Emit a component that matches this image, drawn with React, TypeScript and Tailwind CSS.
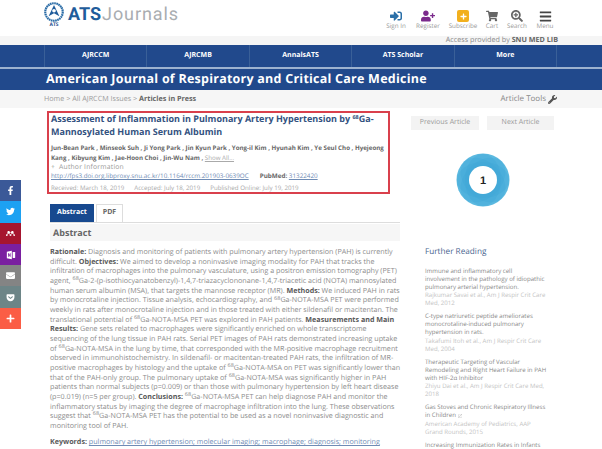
import type { ReactNode } from 'react';
import { FaBars, FaEnvelope, FaExternalLinkAlt, FaFacebookF, FaGetPocket, FaPlus, FaSearchPlus, FaShoppingCart, FaSignInAlt, FaTwitter, FaUserPlus, FaWrench } from 'react-icons/fa';
import { SiMendeley } from 'react-icons/si';

function SubscribeIcon() {
  return (
    <span className="w-[12px] h-[12px] rounded-[2px] bg-[#f2b01e] flex items-center justify-center text-white text-[7px]">
      <FaPlus />
    </span>
  );
}

function NoteIcon() {
  return (
    <svg viewBox="0 0 12 12" className="w-[10px] h-[10px]" fill="currentColor">
      <path d="M1 2 L7 1 V11 L1 10 Z" />
      <rect x="8" y="2.5" width="3" height="7" rx="0.5" />
      <path d="M2.5 8 V4 H3.4 L4.6 6.2 V4 H5.5 V8 H4.6 L3.4 5.8 V8 Z" fill="#7a1fa0" />
    </svg>
  );
}

const topLinks = [
  { label: 'Sign In', icon: <FaSignInAlt className="text-[#2a6fa8] text-[12px]" />, w: 'w-[30px]' },
  { label: 'Register', icon: <FaUserPlus className="text-[#7b2a8c] text-[14px]" />, w: 'w-[34px]' },
  { label: 'Subscribe', icon: <SubscribeIcon />, w: 'w-[36px]' },
  { label: 'Cart', icon: <FaShoppingCart className="text-[#666] text-[12px]" />, w: 'w-[22px]' },
  { label: 'Search', icon: <FaSearchPlus className="text-[#666] text-[12px]" />, w: 'w-[28px]' },
  { label: 'Menu', icon: <FaBars className="text-[#444] text-[13px]" />, w: 'w-[28px]' },
];

const navItems = ['AJRCCM', 'AJRCMB', 'AnnalsATS', 'ATS Scholar', 'More'];

const shareItems = [
  { icon: <FaFacebookF />, bg: 'bg-[#3b5998]' },
  { icon: <FaTwitter />, bg: 'bg-[#1da1f2]' },
  { icon: <SiMendeley />, bg: 'bg-[#a6152f]' },
  { icon: <NoteIcon />, bg: 'bg-[#7a1fa0]' },
  { icon: <FaEnvelope />, bg: 'bg-[#848484]' },
  { icon: <FaGetPocket />, bg: 'bg-[#6d8587]' },
  { icon: <FaPlus />, bg: 'bg-[#fb5d45]' },
];

// line breaks follow the sidebar's wrapping
const reading = [
  {
    title: 'Immune and inflammatory cell\ninvolvement in the pathology of idiopathic\npulmonary arterial hypertension.',
    meta: 'Rajkumar Savai et al., Am J Respir Crit Care\nMed, 2012',
  },
  {
    title: 'C-type natriuretic peptide ameliorates\nmonocrotaline-induced pulmonary\nhypertension in rats.',
    meta: 'Takafumi Itoh et al., Am J Respir Crit Care\nMed, 2004',
  },
  {
    title: 'Therapeutic Targeting of Vascular\nRemodeling and Right Heart Failure in PAH\nwith HIF-2α Inhibitor',
    meta: 'Zhiyu Dai et al., Am J Respir Crit Care Med,\n2018',
  },
  {
    title: 'Gas Stoves and Chronic Respiratory Illness\nin Children',
    meta: 'American Academy of Pediatrics, AAP\nGrand Rounds, 2015',
    external: true,
  },
  { title: 'Increasing Immunization Rates in Infants', meta: '' },
];

function Logo() {
  return (
    <div className="flex items-start gap-[4px]">
      <div className="flex flex-col items-center w-[20px]">
        <svg viewBox="0 0 24 24" className="w-[20px] h-[20px]">
          <circle cx="12" cy="12" r="10.5" fill="none" stroke="#2b6ca6" strokeWidth="2.6" strokeDasharray="2 0.6" />
          <circle cx="12" cy="12" r="8.2" fill="#fff" />
          <path d="M12 3.5 L18.5 17 L12 13.5 L5.5 17 Z" fill="#1f5c9b" />
          <circle cx="12" cy="10.5" r="2.2" fill="#fff" />
        </svg>
        <span className="text-[5px] leading-[5px] font-bold text-[#1f4f8f] mt-[1px]">ATS</span>
      </div>
      <div className="text-[18px] leading-[20px] font-['Roboto',sans-serif] mt-[3px]">
        <span className="font-bold text-[#1f5c9b]">ATS</span>
        <span className="text-[#a9adb1] ml-[1px] tracking-[0.9px]">Journals</span>
      </div>
    </div>
  );
}

function Iso({ children }: { children: ReactNode }) {
  return <sup className="text-[5.5px]">{children}</sup>;
}

function B({ children }: { children: ReactNode }) {
  return <strong className="font-bold text-[#5a5a5a]">{children}</strong>;
}

function Badge() {
  return (
    <svg viewBox="0 0 54 54" className="w-[54px] h-[54px]">
      <circle cx="27" cy="27" r="26.5" fill="#5bb9e0" />
      {[0, 45, 90, 135].map((a) => (
        <ellipse key={a} cx="27" cy="27" rx="26" ry="18" fill="#3fa6d6" opacity="0.35" transform={`rotate(${a} 27 27)`} />
      ))}
      <circle cx="27" cy="27" r="14" fill="#fff" />
      <text x="27" y="31" textAnchor="middle" fontSize="11" fontWeight="700" fill="#222" fontFamily="'Liberation Sans', sans-serif">1</text>
    </svg>
  );
}

export default function App() {
  return (
    <div className="w-[602px] h-[449px] overflow-hidden bg-white relative font-['Open_Sans',sans-serif] [text-rendering:geometricPrecision]">
      <header className="h-[36px] flex justify-between pl-[44px] pr-[43px] pt-[2px]">
        <Logo />
        <div className="flex pt-[7px]">
          {topLinks.map((l) => (
            <div key={l.label} className={`${l.w} flex flex-col items-center`}>
              <div className="h-[14px] flex items-center">{l.icon}</div>
              <span className="text-[6.3px] leading-[8px] -mt-[1px] text-[#9a9a9a] whitespace-nowrap">{l.label}</span>
            </div>
          ))}
        </div>
      </header>

      <div className="h-[9px] bg-[#f5f5f5] flex justify-end items-center pr-[44px] text-[7.2px] text-[#8a8a8a]">
        <span>
          Access provided by <span className="font-bold text-[#666]">SNU MED LIB</span>
        </span>
      </div>

      <nav className="h-[22px] bg-[#21498c] flex pl-[44px] pr-[45px]">
        {navItems.map((n) => (
          <div key={n} className="flex-1 border-l border-[#3a6098] last:border-r flex items-center justify-center text-white text-[7px] font-bold">
            {n}
          </div>
        ))}
      </nav>
      <div className="h-[23px] bg-[#21498c] border-t-2 border-[#9db2cf] pl-[46px] flex items-center text-white text-[12.5px] font-bold tracking-[0.24px]">
        American Journal of Respiratory and Critical Care Medicine
      </div>

      <div className="h-[18px] bg-[#f6f6f6] flex items-center justify-between pl-[44px] pr-[45px]">
        <span className="text-[7.2px] text-[#9c9c9c]">
          Home &gt; All AJRCCM Issues &gt; <span className="font-bold text-[#666]">Articles in Press</span>
        </span>
        <span className="text-[8px] text-[#888] flex items-center gap-[2px]">
          Article Tools <FaWrench className="text-[#555] text-[9px]" />
        </span>
      </div>

      <div className="flex">
        <main className="w-[400px] shrink-0 pl-[47px] pt-[3px]">
          <section className="w-[343px] h-[83px] border-2 border-[#d9404c] pl-[2px]">
            <h1 className="text-[9px] leading-[12.5px] font-bold text-[#33527f]">
              Assessment of Inflammation in Pulmonary Artery Hypertension by <Iso>68</Iso>Ga-
              <br />
              Mannosylated Human Serum Albumin
            </h1>
            <p className="mt-[5px] text-[6.2px] leading-[9.7px] font-bold text-[#666] whitespace-nowrap">
              Jun-Bean Park , Minseok Suh , Ji Yong Park , Jin Kyun Park , Yong-il Kim , Hyunah Kim , Ye Seul Cho , Hyejeong
              <br />
              Kang , Kibyung Kim , Jae-Hoon Choi , Jin-Wu Nam ,{' '}
              <span className="font-normal text-[#aaa] underline">Show All...</span>
            </p>
            <p className="text-[6.8px] leading-[9px] text-[#999] tracking-[0.2px]">+&nbsp;&nbsp;Author Information</p>
            <p className="text-[6.3px] leading-[9px] text-[#6f8cb5] whitespace-nowrap">
              <span className="underline">http://fps3.doi.org.libproxy.snu.ac.kr/10.1164/rccm.201903-0639OC</span>
              <span className="ml-[11px] font-bold text-[#666]">PubMed: </span>
              <span className="underline">31322420</span>
            </p>
            <p className="mt-[4px] text-[6.2px] leading-[8px] text-[#aaa] flex gap-[10px]">
              <span>Received: March 18, 2019</span>
              <span>Accepted: July 18, 2019</span>
              <span>Published Online: July 19, 2019</span>
            </p>
          </section>

          <div className="mt-[10px] ml-[3px] h-[19px] flex border-b border-[#ddd]">
            <span className="w-[44px] bg-[#17498f] text-white text-[7px] font-bold flex items-center justify-center">Abstract</span>
            <span className="ml-[2px] w-[27px] border border-b-0 border-[#ddd] text-[#666] text-[7px] font-bold flex items-center justify-center">PDF</span>
          </div>

          <h2 className="mt-[1px] ml-[3px] h-[17px] pl-[3px] bg-[#f6f6f6] flex items-center text-[9px] font-bold text-[#666]">Abstract</h2>

          <div className="ml-[3px] mt-[7px] text-[7.17px] leading-[9.65px] text-[#8c8c8c] whitespace-nowrap">
            <p>
              <B>Rationale:</B> Diagnosis and monitoring of patients with pulmonary artery hypertension (PAH) is currently
              <br />
              difficult. <B>Objectives:</B> We aimed to develop a noninvasive imaging modality for PAH that tracks the
              <br />
              infiltration of macrophages into the pulmonary vasculature, using a positron emission tomography (PET)
              <br />
              agent, <Iso>68</Iso>Ga-2-(p-isothiocyanatobenzyl)-1,4,7-triazacyclononane-1,4,7-triacetic acid (NOTA) mannosylated
              <br />
              human serum albumin (MSA), that targets the mannose receptor (MR). <B>Methods:</B> We induced PAH in rats
              <br />
              by monocrotaline injection. Tissue analysis, echocardiography, and <Iso>68</Iso>Ga-NOTA-MSA PET were performed
              <br />
              weekly in rats after monocrotaline injection and in those treated with either sildenafil or macitentan. The
              <br />
              translational potential of <Iso>68</Iso>Ga-NOTA-MSA PET was explored in PAH patients. <B>Measurements and Main</B>
              <br />
              <B>Results:</B> Gene sets related to macrophages were significantly enriched on whole transcriptome
              <br />
              sequencing of the lung tissue in PAH rats. Serial PET images of PAH rats demonstrated increasing uptake
              <br />
              of <Iso>68</Iso>Ga-NOTA-MSA in the lung by time, that corresponded with the MR-positive macrophage recruitment
              <br />
              observed in immunohistochemistry. In sildenafil- or macitentan-treated PAH rats, the infiltration of MR-
              <br />
              positive macrophages by histology and the uptake of <Iso>68</Iso>Ga-NOTA-MSA on PET was significantly lower than
              <br />
              that of the PAH-only group. The pulmonary uptake of <Iso>68</Iso>Ga-NOTA-MSA was significantly higher in PAH
              <br />
              patients than normal subjects (p=0.009) or than those with pulmonary hypertension by left heart disease
              <br />
              (p=0.019) (n=5 per group). <B>Conclusions:</B> <Iso>68</Iso>Ga-NOTA-MSA PET can help diagnose PAH and monitor the
              <br />
              inflammatory status by imaging the degree of macrophage infiltration into the lung. These observations
              <br />
              suggest that <Iso>68</Iso>Ga-NOTA-MSA PET has the potential to be used as a novel noninvasive diagnostic and
              <br />
              monitoring tool of PAH.
            </p>
            <p className="mt-[7px]">
              <B>Keywords: </B>
              <span className="text-[#6f8cb5] underline">pulmonary artery hypertension; molecular imaging; macrophage; diagnosis; monitoring</span>
            </p>
          </div>
        </main>

        <aside className="flex-1 pl-[11px] pt-[8px]">
          <div className="flex gap-[8px]">
            <span className="w-[68px] h-[14px] bg-[#f3f3f3] text-[#999] text-[7px] flex items-center justify-center">Previous Article</span>
            <span className="w-[67px] h-[14px] bg-[#f3f3f3] text-[#999] text-[7px] flex items-center justify-center">Next Article</span>
          </div>
          <div className="ml-[45px] mt-[23px] w-[54px]">
            <Badge />
          </div>
          <h3 className="mt-[39px] ml-[14px] text-[8.2px] leading-[12px] text-[#4a6690]">Further Reading</h3>
          <div className="mt-[9px] ml-[14px] flex flex-col gap-[5.5px]">
            {reading.map((r) => (
              <div key={r.title}>
                <p className="text-[6.1px] leading-[7.8px] text-[#888] whitespace-pre-line">
                  {r.title}
                  {r.external && <FaExternalLinkAlt className="inline ml-[2px] text-[#ccc] text-[4px]" />}
                </p>
                {r.meta && <p className="mt-[1px] text-[6.1px] leading-[7.8px] text-[#c4c4c4] whitespace-pre-line">{r.meta}</p>}
              </div>
            ))}
          </div>
        </aside>
      </div>

      <div className="absolute left-0 top-[180px] w-[21px] flex flex-col">
        {shareItems.map((s, i) => (
          <div key={i} className={`h-[21.3px] ${s.bg} flex items-center justify-center text-white text-[9px]`}>
            {s.icon}
          </div>
        ))}
      </div>
    </div>
  );
}
